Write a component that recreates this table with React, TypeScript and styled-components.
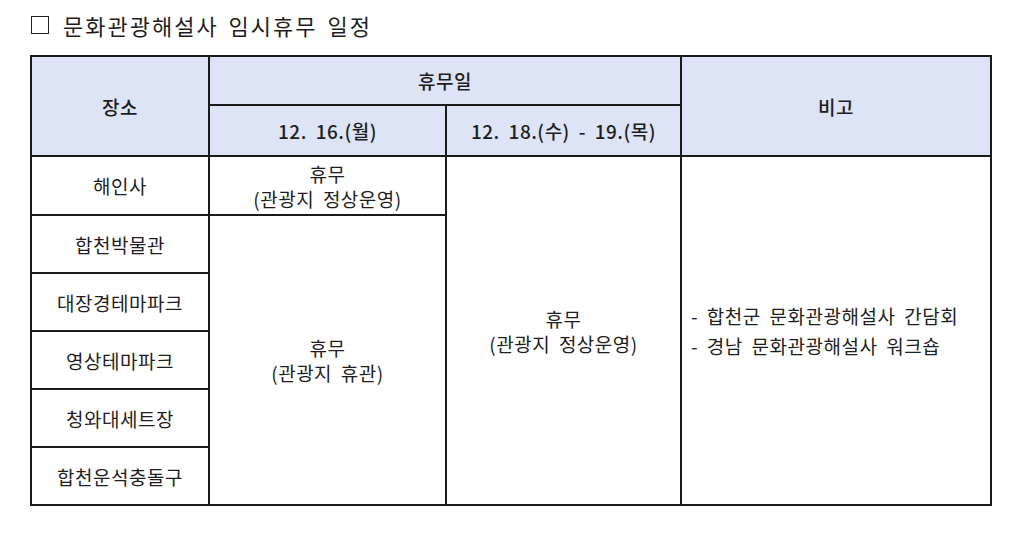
import React from 'react';
import styled, { createGlobalStyle } from 'styled-components';

const GlobalStyle = createGlobalStyle`
  body {
    margin: 0;
    background: #ffffff;
    color: #1e1e1e;
    font-family: 'Noto Sans CJK KR', 'Noto Sans', sans-serif;
  }
`;

const Page = styled.div`
  padding: 10px 0 0 30px;
  width: 1024px;
  box-sizing: border-box;
`;

const Title = styled.h1`
  margin: 0 0 15px 1px;
  font-size: 22px;
  font-weight: 400;
  line-height: 30px;
  letter-spacing: 2px;
  word-spacing: 3px;
  display: flex;
  align-items: center;
  gap: 14px;
`;

const Box = styled.span`
  display: inline-block;
  width: 18px;
  height: 18px;
  border: 1.5px solid #222;
  box-sizing: border-box;
`;

const Table = styled.table`
  border-collapse: collapse;
  width: 960px;
  table-layout: fixed;
  font-size: 19px;
`;

const Cell = styled.td<{ $head?: boolean; $align?: 'left' | 'center'; $h?: number }>`
  border: 2px solid #1a1a1a;
  background: ${({ $head }) => ($head ? '#dde4f5' : '#ffffff')};
  text-align: ${({ $align }) => $align ?? 'center'};
  vertical-align: middle;
  height: ${({ $h }) => ($h ? `${$h}px` : 'auto')};
  padding: ${({ $align }) => ($align === 'left' ? '0 0 0 9px' : '0')};
  line-height: ${({ $align }) => ($align === 'left' ? '30px' : '25px')};
  font-weight: ${({ $head }) => ($head ? 500 : 400)};
  letter-spacing: 0.5px;
  word-spacing: 4px;
  box-sizing: border-box;
`;

const places = ['합천박물관', '대장경테마파크', '영상테마파크', '청와대세트장', '합천운석충돌구'];

const App: React.FC = () => (
  <>
    <GlobalStyle />
    <Page>
      <Title>
        <Box />
        <span>문화관광해설사 임시휴무 일정</span>
      </Title>
      <Table>
        <colgroup>
          <col style={{ width: 178 }} />
          <col style={{ width: 237 }} />
          <col style={{ width: 235 }} />
          <col style={{ width: 310 }} />
        </colgroup>
        <thead>
          <tr>
            <Cell as="th" $head rowSpan={2}>장소</Cell>
            <Cell as="th" $head colSpan={2} $h={49}>휴무일</Cell>
            <Cell as="th" $head rowSpan={2}>비고</Cell>
          </tr>
          <tr>
            <Cell as="th" $head $h={51}>12. 16.(월)</Cell>
            <Cell as="th" $head>12. 18.(수) - 19.(목)</Cell>
          </tr>
        </thead>
        <tbody>
          <tr>
            <Cell $h={59}>해인사</Cell>
            <Cell>휴무<br />(관광지 정상운영)</Cell>
            <Cell rowSpan={6}>휴무<br />(관광지 정상운영)</Cell>
            <Cell rowSpan={6} $align="left">
              - 합천군 문화관광해설사 간담회<br />- 경남 문화관광해설사 워크숍
            </Cell>
          </tr>
          {places.map((p, i) => (
            <tr key={p}>
              <Cell $h={58}>{p}</Cell>
              {i === 0 && <Cell rowSpan={5}>휴무<br />(관광지 휴관)</Cell>}
            </tr>
          ))}
        </tbody>
      </Table>
    </Page>
  </>
);

export default App;
